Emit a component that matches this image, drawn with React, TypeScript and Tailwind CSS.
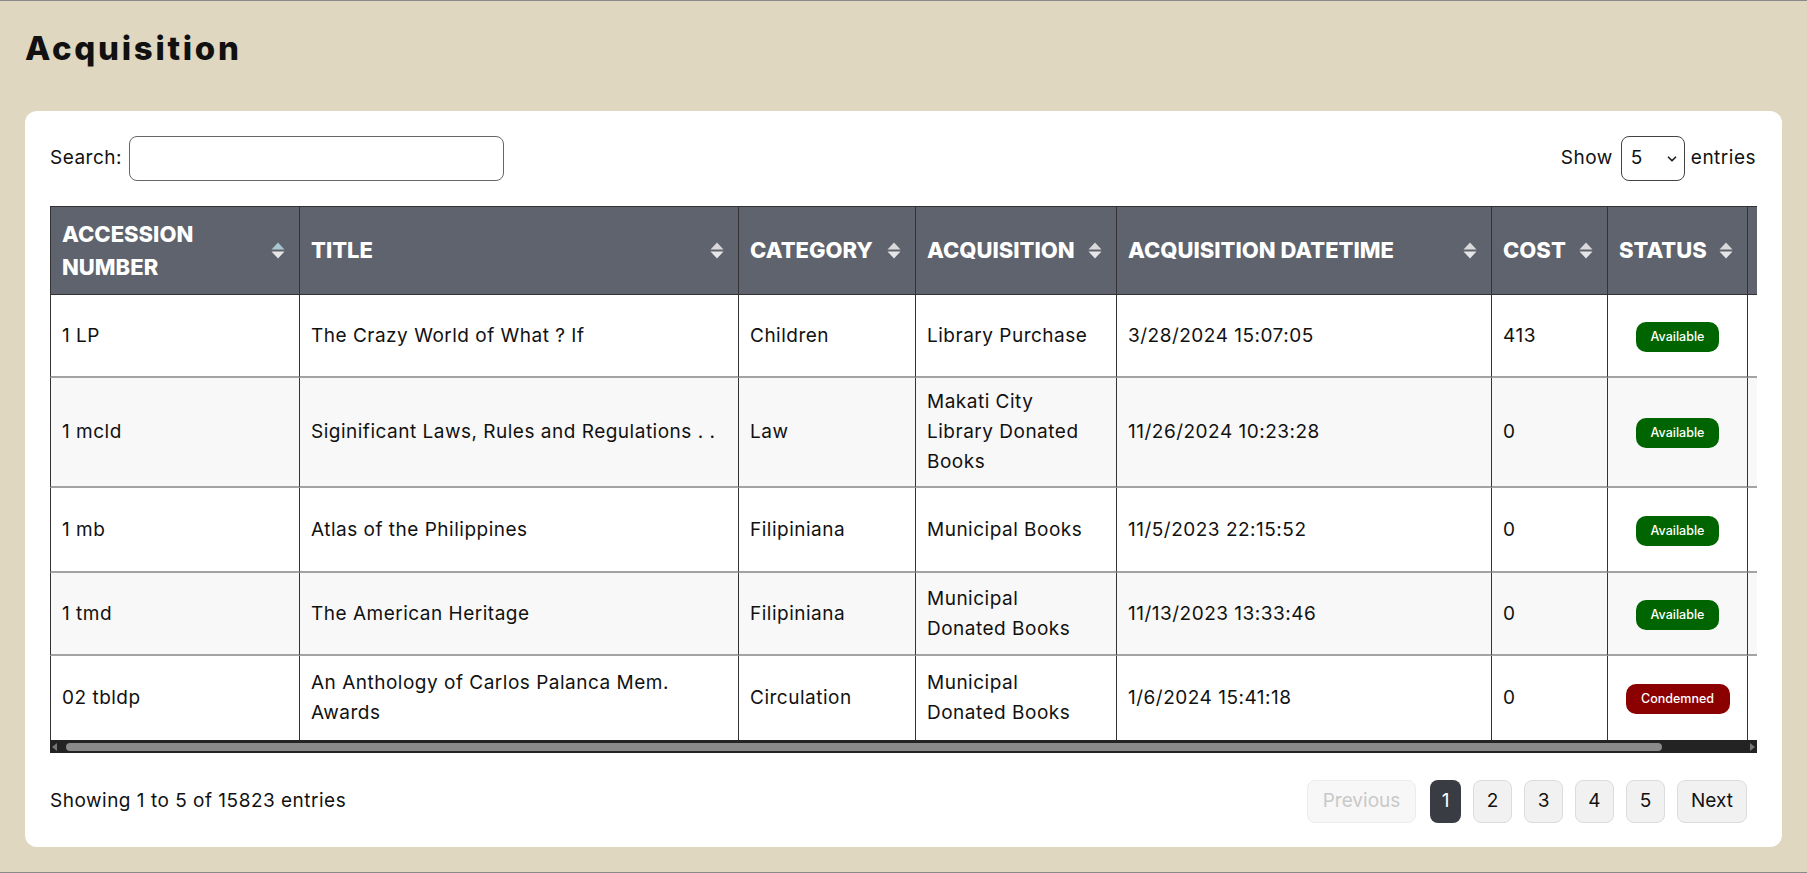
import React from 'react';
import { ChevronDown } from 'lucide-react';

type Row = {
  acc: string;
  title: string;
  cat: string;
  acq: string;
  dt: string;
  cost: string;
  status: 'Available' | 'Condemned';
  h: string;
  bg: string;
  wrapTitle?: boolean;
};

const rows: Row[] = [
  { acc: '1 LP', title: 'The Crazy World of What ? If', cat: 'Children', acq: 'Library Purchase', dt: '3/28/2024 15:07:05', cost: '413', status: 'Available', h: 'h-[83px]', bg: 'bg-white' },
  { acc: '1 mcld', title: 'Siginificant Laws, Rules and Regulations . .', cat: 'Law', acq: 'Makati City Library Donated Books', dt: '11/26/2024 10:23:28', cost: '0', status: 'Available', h: 'h-[110px]', bg: 'bg-[#f8f8f8]' },
  { acc: '1 mb', title: 'Atlas of the Philippines', cat: 'Filipiniana', acq: 'Municipal Books', dt: '11/5/2023 22:15:52', cost: '0', status: 'Available', h: 'h-[85px]', bg: 'bg-white' },
  { acc: '1 tmd', title: 'The American Heritage', cat: 'Filipiniana', acq: 'Municipal Donated Books', dt: '11/13/2023 13:33:46', cost: '0', status: 'Available', h: 'h-[83px]', bg: 'bg-[#f8f8f8]' },
  { acc: '02 tbldp', title: 'An Anthology of Carlos Palanca Mem. Awards', cat: 'Circulation', acq: 'Municipal Donated Books', dt: '1/6/2024 15:41:18', cost: '0', status: 'Condemned', h: 'h-[84px]', bg: 'bg-white', wrapTitle: true },
];

const columns = [
  { label: 'ACCESSION NUMBER', w: 'w-[250px]', wrap: true },
  { label: 'TITLE', w: 'w-[439px]' },
  { label: 'CATEGORY', w: 'w-[177px]' },
  { label: 'ACQUISITION', w: 'w-[201px]' },
  { label: 'ACQUISITION DATETIME', w: 'w-[375px]' },
  { label: 'COST', w: 'w-[116px]' },
  { label: 'STATUS', w: 'w-[140px]' },
  { label: '', w: 'w-[119px]' },
];

function SortIcon({ active }: { active?: boolean }) {
  return (
    <svg width="14" height="17" viewBox="0 0 14 17" className="shrink-0">
      <path d="M7 0.5 L13.5 7.5 H0.5 Z" fill={active ? '#a8c6cf' : '#d9d9d9'} />
      <path d="M0.5 9.5 H13.5 L7 16.5 Z" fill="#e6e6e6" />
    </svg>
  );
}

function Badge({ status }: { status: Row['status'] }) {
  const green = status === 'Available';
  return (
    <span
      className={`inline-flex items-center justify-center h-[30px] rounded-[10px] text-white text-[12.5px] font-medium ${
        green ? 'bg-[#006400] w-[83px]' : 'bg-[#8b0000] w-[104px]'
      }`}
    >
      {status}
    </span>
  );
}

export default function App() {
  const cell = 'border-r border-[#333] px-[11px] align-middle';
  return (
    <div className="h-[873px] bg-[#dfd7c0] border-y border-[#8a8a8a] px-[25px] font-['Inter',sans-serif] text-[#111] overflow-hidden">
      <h1 className="mt-[28px] text-[33px] leading-[38px] font-extrabold tracking-[2.7px] text-[#111]">Acquisition</h1>

      <div className="mt-[44px] bg-white rounded-[12px] p-[25px] pb-[24px] text-[19px] tracking-[0.5px]">
        <div className="flex items-center justify-between">
          <label className="flex items-center gap-[7px]">
            <span>Search:</span>
            <input className="w-[375px] h-[45px] rounded-[8px] border border-[#666] px-3 outline-none" />
          </label>
          <div className="flex items-center gap-[6px] pr-[1px]">
            <span className="mr-[2px]">Show</span>
            <div className="relative">
              <select className="appearance-none w-[64px] h-[45px] rounded-[8px] border border-[#444] pl-[9px] bg-white text-[19px]">
                <option>5</option>
                <option>10</option>
                <option>25</option>
              </select>
              <ChevronDown size={14} strokeWidth={3} className="absolute right-[6px] top-[16px] text-[#222] pointer-events-none" />
            </div>
            <span>entries</span>
          </div>
        </div>

        <div className="mt-[25px] w-full overflow-hidden">
          <table className="table-fixed border-separate border-spacing-0 w-[1817px]">
            <thead>
              <tr>
                {columns.map((c, i) => (
                  <th
                    key={i}
                    className={`${c.w} h-[89px] bg-[#5e636d] text-white text-left font-extrabold text-[22px] leading-[33px] tracking-[0px] border-y border-r border-[#333] pl-[11px] pr-[14px] ${
                      i === 0 ? 'border-l' : ''
                    }`}
                  >
                    <div className="flex items-center justify-between gap-2">
                      <span className={c.wrap ? '' : 'whitespace-nowrap'}>{c.label}</span>
                      {i < 7 && <SortIcon active={i === 0} />}
                    </div>
                  </th>
                ))}
              </tr>
            </thead>
            <tbody className="leading-[30px]">
              {rows.map((r, ri) => {
                const last = ri === rows.length - 1;
                const b = last ? '' : 'border-b-2 border-b-[#a3a3a3]';
                return (
                  <tr key={r.acc} className={r.bg}>
                    <td className={`${cell} ${b} ${r.h} border-l`}>{r.acc}</td>
                    <td className={`${cell} ${b}`}>
                      <div className={r.wrapTitle ? 'max-w-[400px]' : 'whitespace-nowrap'}>{r.title}</div>
                    </td>
                    <td className={`${cell} ${b}`}>{r.cat}</td>
                    <td className={`${cell} ${b}`}>
                      <div className="max-w-[170px]">{r.acq}</div>
                    </td>
                    <td className={`${cell} ${b}`}>{r.dt}</td>
                    <td className={`${cell} ${b}`}>{r.cost}</td>
                    <td className={`${cell} ${b} text-center tracking-normal`}>
                      <Badge status={r.status} />
                    </td>
                    <td className={`${cell} ${b}`}></td>
                  </tr>
                );
              })}
            </tbody>
          </table>
          <div className="h-[13px] bg-[#232323] flex items-center">
            <span className="ml-[2px] w-0 h-0 border-y-[4px] border-y-transparent border-r-[5px] border-r-[#777]" />
            <div className="ml-[9px] w-[1596px] h-[8px] rounded-full bg-[#8a8a8a]" />
            <span className="ml-auto mr-[2px] w-0 h-0 border-y-[4px] border-y-transparent border-l-[5px] border-l-[#777]" />
          </div>
        </div>

        <div className="mt-[27px] flex items-center justify-between">
          <span>Showing 1 to 5 of 15823 entries</span>
          <div className="flex items-center gap-[12px] pr-[10px] tracking-normal">
            <button className="w-[109px] h-[43px] rounded-[8px] border border-[#ececec] bg-[#f7f7f7] text-[#c9c9c9]">Previous</button>
            <button className="ml-[2px] w-[31px] h-[43px] rounded-[8px] bg-[#393c43] text-white">1</button>
            {['2', '3', '4', '5'].map((n) => (
              <button key={n} className="w-[39px] h-[43px] rounded-[8px] border border-[#dcdcdc] bg-[#f1f1f1] text-[#111]">
                {n}
              </button>
            ))}
            <button className="w-[70px] h-[43px] rounded-[8px] border border-[#dcdcdc] bg-[#f1f1f1] text-[#111]">Next</button>
          </div>
        </div>
      </div>
    </div>
  );
}
